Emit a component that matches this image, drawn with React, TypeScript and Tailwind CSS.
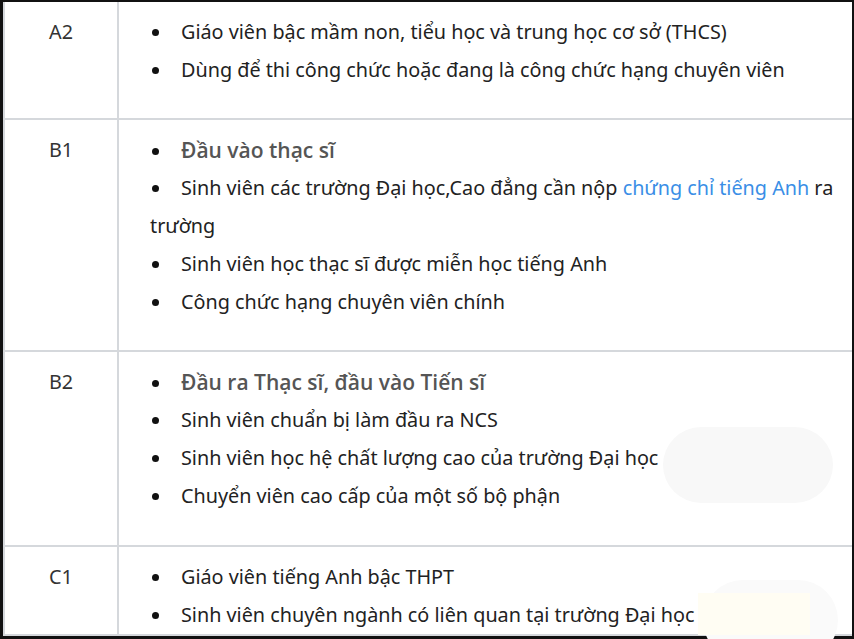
import React from "react";

type Item = { text: React.ReactNode; bold?: boolean };

const rows: { label: string; h: string; items: Item[] }[] = [
  {
    label: "A2",
    h: "h-[118px]",
    items: [
      { text: "Giáo viên bậc mầm non, tiểu học và trung học cơ sở (THCS)" },
      { text: "Dùng để thi công chức hoặc đang là công chức hạng chuyên viên" },
    ],
  },
  {
    label: "B1",
    h: "h-[232px]",
    items: [
      { text: "Đầu vào thạc sĩ", bold: true },
      {
        text: (
          <>
            Sinh viên các trường Đại học,Cao đẳng cần nộp{" "}
            <a className="text-[#3a8ee6]">chứng chỉ tiếng Anh</a> ra
            <br />
            trường
          </>
        ),
      },
      { text: "Sinh viên học thạc sĩ được miễn học tiếng Anh" },
      { text: "Công chức hạng chuyên viên chính" },
    ],
  },
  {
    label: "B2",
    h: "h-[195px]",
    items: [
      { text: "Đầu ra Thạc sĩ, đầu vào Tiến sĩ", bold: true },
      { text: "Sinh viên chuẩn bị làm đầu ra NCS" },
      { text: "Sinh viên học hệ chất lượng cao của trường Đại học" },
      { text: "Chuyển viên cao cấp của một số bộ phận" },
    ],
  },
  {
    label: "C1",
    h: "h-[89px]",
    items: [
      { text: "Giáo viên tiếng Anh bậc THPT" },
      { text: "Sinh viên chuyên ngành có liên quan tại trường Đại học" },
    ],
  },
];

const Bullet = () => (
  <span className="inline-block w-[7px] h-[7px] rounded-full bg-[#111] ml-[2px] mr-[22px] align-middle relative -top-[1px]" />
);

export default function App() {
  return (
    <div className="w-[854px] h-[639px] bg-white overflow-hidden font-['Noto_Sans',sans-serif] text-[19.8px] text-[#222]">
      <div className="relative h-full border-l-[3px] border-t-2 border-r-2 border-b-[3px] border-[#111]">
        <div className="h-full border-l-2 border-[#d5d8dc]">
          {rows.map((row) => (
            <div key={row.label} className={`flex ${row.h} border-b-2 border-[#d5d8dc]`}>
              <div className="w-[114px] shrink-0 border-r-2 border-[#d5d8dc] pt-[11px] text-center leading-[38px] text-[#333]">
                {row.label}
              </div>
              <ul className="flex-1 pt-[11px] pl-[31px] pr-[6px] leading-[38px] whitespace-nowrap">
                {row.items.map((it, i) => (
                  <li
                    key={i}
                    className={
                      it.bold
                        ? "font-['Open_Sans',sans-serif] font-semibold text-[#555] text-[21px]"
                        : ""
                    }
                  >
                    <Bullet />
                    {it.text}
                  </li>
                ))}
              </ul>
            </div>
          ))}
        </div>

        {/* faint overlay shapes */}
        <div className="absolute left-[660px] top-[425px] w-[170px] h-[76px] rounded-full bg-[#f8f8f8]" />
        <div className="absolute left-[700px] top-[578px] w-[135px] h-[80px] rounded-[40px] bg-[#fafafa]" />
        <div className="absolute left-[695px] top-[591px] w-[112px] h-[42px] bg-[#fffdf3]" />
      </div>
    </div>
  );
}
